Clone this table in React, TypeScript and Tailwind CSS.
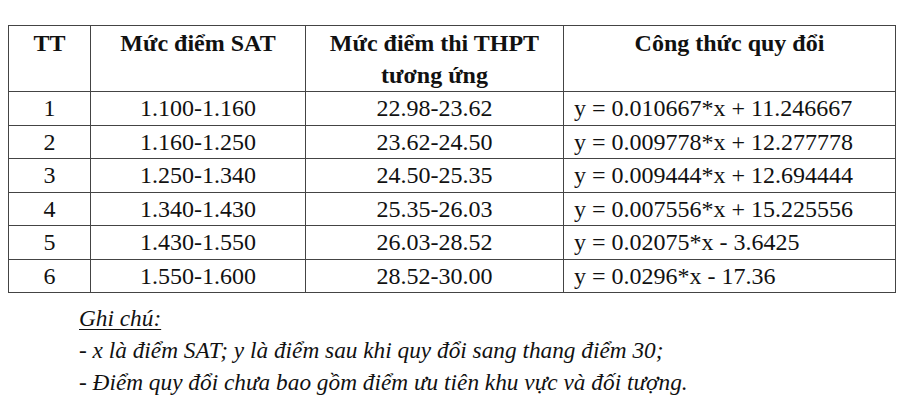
const rows = [
  ['1', '1.100-1.160', '22.98-23.62', 'y = 0.010667*x + 11.246667'],
  ['2', '1.160-1.250', '23.62-24.50', 'y = 0.009778*x + 12.277778'],
  ['3', '1.250-1.340', '24.50-25.35', 'y = 0.009444*x + 12.694444'],
  ['4', '1.340-1.430', '25.35-26.03', 'y = 0.007556*x + 15.225556'],
  ['5', '1.430-1.550', '26.03-28.52', 'y = 0.02075*x - 3.6425'],
  ['6', '1.550-1.600', '28.52-30.00', 'y = 0.0296*x - 17.36'],
];

const cell = "border-[1.5px] border-[#444] p-0 font-['Liberation_Serif']";

export default function App() {
  return (
    <div className="w-[911px] h-[417px] bg-white text-[#111] overflow-hidden font-['Liberation_Serif']">
      <div className="pt-[25px] pl-[8px]">
        <table className="border-collapse text-[24px] leading-[32px]">
          <colgroup>
            <col className="w-[82px]" />
            <col className="w-[215px]" />
            <col className="w-[258px]" />
            <col className="w-[332px]" />
          </colgroup>
          <thead>
            <tr className="h-[66px]">
              <th className={`${cell} align-top font-bold text-center pt-[1px]`}>TT</th>
              <th className={`${cell} align-top font-bold text-center pt-[1px]`}>Mức điểm SAT</th>
              <th className={`${cell} align-top font-bold text-center pt-[1px]`}>
                Mức điểm thi THPT
                <br />
                tương ứng
              </th>
              <th className={`${cell} align-top font-bold text-center pt-[1px]`}>Công thức quy đổi</th>
            </tr>
          </thead>
          <tbody>
            {rows.map((r) => (
              <tr key={r[0]} className="h-[33.5px]">
                <td className={`${cell} text-center`}>{r[0]}</td>
                <td className={`${cell} text-center`}>{r[1]}</td>
                <td className={`${cell} text-center`}>{r[2]}</td>
                <td className={`${cell} text-left pl-[10px] whitespace-nowrap`}>{r[3]}</td>
              </tr>
            ))}
          </tbody>
        </table>
      </div>
      <div className="pl-[79px] mt-[9px] text-[23.3px] leading-[32px] italic font-['Liberation_Serif']">
        <div>
          <span className="underline underline-offset-[3px] decoration-1">Ghi chú:</span>
        </div>
        <div>- x là điểm SAT; y là điểm sau khi quy đổi sang thang điểm 30;</div>
        <div>- Điểm quy đổi chưa bao gồm điểm ưu tiên khu vực và đối tượng.</div>
      </div>
    </div>
  );
}
